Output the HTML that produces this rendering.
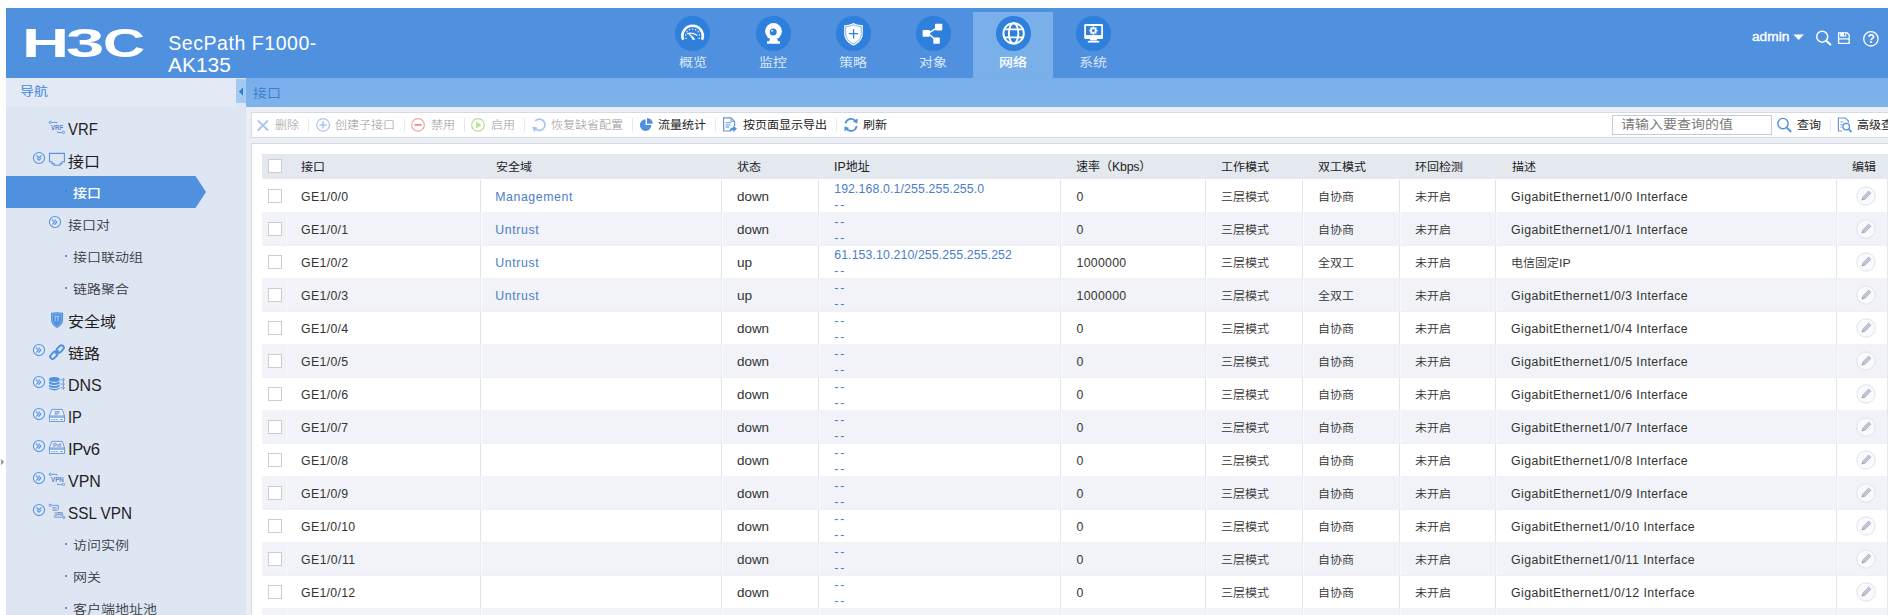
<!DOCTYPE html>
<html lang="zh-CN"><head><meta charset="utf-8"><title>H3C SecPath F1000-AK135</title>
<style>
html,body{margin:0;padding:0;background:#fff;}
body{width:1888px;height:615px;overflow:hidden;position:relative;font-family:"Liberation Sans","Noto Sans CJK SC",sans-serif;font-weight:300;}
.t{position:absolute;white-space:nowrap;}
.r{position:absolute;}
svg{display:block;overflow:visible}
</style></head><body>
<div class="r" style="left:6px;top:8px;width:1882px;height:70px;background:#4f91df;"></div>
<div class="r" style="left:5.5px;top:78px;width:240.5px;height:537px;background:#dfe6f3;"></div>
<div class="r" style="left:246px;top:78px;width:1642px;height:29px;background:linear-gradient(#78aeea,#7eb3eb);"></div>
<div class="r" style="left:246px;top:107px;width:1642px;height:508px;background:#ebeef4;"></div>
<div class="r" style="left:5.5px;top:78px;width:230.5px;height:29px;background:#e4eaf5;"></div>
<div class="r" style="left:236px;top:79px;width:10px;height:24px;background:#a3caf2;"></div>
<svg class="r" style="left:236px;top:79px" width="10" height="24"><path d="M7 8.3 L3 12.5 L7 16.7Z" fill="#2f7bd6"/></svg>
<div class="r" style="left:0;top:22.5px;font-size:40px;line-height:40px;color:#fff;font-weight:bold;height:40px"><span class="t" style="left:21.6px;transform-origin:0 50%;transform:scale(1.63,1.02)">H</span><span class="t" style="left:65.8px;transform-origin:0 50%;transform:scale(1.725,1.02)">3</span><span class="t" style="left:102.5px;transform-origin:0 50%;transform:scale(1.46,1.02)">C</span></div>
<div class="t " style="left:168.3px;top:32.0px;font-size:19.5px;line-height:22px;color:#fff;letter-spacing:0.544px;">SecPath F1000-</div>
<div class="t " style="left:168.3px;top:53.5px;font-size:19.5px;line-height:22px;color:#fff;transform-origin:0 50%;transform:scaleX(1.0724);">AK135</div>
<div class="r" style="left:973px;top:12px;width:80px;height:66px;background:#7ab0ea;"></div>
<div class="r" style="left:675.2px;top:15.899999999999999px;width:34.8px;height:34.8px;border-radius:50%;background:#2f7fdc"></div>
<div class="t" style="left:653px;top:53px;width:80px;text-align:center;font-size:14px;line-height:20px;color:#dbe8f9;font-weight:400;transform:scaleY(0.875)">概览</div>
<div class="r" style="left:756.1px;top:15.899999999999999px;width:34.8px;height:34.8px;border-radius:50%;background:#2f7fdc"></div>
<div class="t" style="left:733px;top:53px;width:80px;text-align:center;font-size:14px;line-height:20px;color:#dbe8f9;font-weight:400;transform:scaleY(0.875)">监控</div>
<div class="r" style="left:836.1px;top:15.899999999999999px;width:34.8px;height:34.8px;border-radius:50%;background:#2f7fdc"></div>
<div class="t" style="left:813px;top:53px;width:80px;text-align:center;font-size:14px;line-height:20px;color:#dbe8f9;font-weight:400;transform:scaleY(0.875)">策略</div>
<div class="r" style="left:916.1px;top:15.899999999999999px;width:34.8px;height:34.8px;border-radius:50%;background:#2f7fdc"></div>
<div class="t" style="left:893px;top:53px;width:80px;text-align:center;font-size:14px;line-height:20px;color:#dbe8f9;font-weight:400;transform:scaleY(0.875)">对象</div>
<div class="r" style="left:996.1px;top:15.899999999999999px;width:34.8px;height:34.8px;border-radius:50%;background:#2f7fdc"></div>
<div class="t" style="left:973px;top:53px;width:80px;text-align:center;font-size:14px;line-height:20px;color:#fff;font-weight:500;transform:scaleY(0.875)">网络</div>
<div class="r" style="left:1076.1px;top:15.899999999999999px;width:34.8px;height:34.8px;border-radius:50%;background:#2f7fdc"></div>
<div class="t" style="left:1053px;top:53px;width:80px;text-align:center;font-size:14px;line-height:20px;color:#dbe8f9;font-weight:400;transform:scaleY(0.875)">系统</div>
<svg class="r" style="left:660px;top:8px" width="460" height="70" viewBox="660 8 460 70"><path d="M683.14 39.72 A10.2 10.2 0 1 1 702.06 39.72" fill="none" stroke="#fff" stroke-width="2.6"/><circle cx="686.12" cy="38.26" r="0.75" fill="#fff"/><circle cx="685.77" cy="34.94" r="0.75" fill="#fff"/><circle cx="687.02" cy="31.84" r="0.75" fill="#fff"/><circle cx="689.58" cy="29.70" r="0.75" fill="#fff"/><circle cx="692.60" cy="29.00" r="0.75" fill="#fff"/><circle cx="695.62" cy="29.70" r="0.75" fill="#fff"/><circle cx="698.18" cy="31.84" r="0.75" fill="#fff"/><circle cx="699.43" cy="34.94" r="0.75" fill="#fff"/><circle cx="699.08" cy="38.26" r="0.75" fill="#fff"/><path d="M687.2 33.6 Q692.5 32.2 697.4 35.4" fill="none" stroke="#fff" stroke-width="1.2"/><path d="M687.4 33.2 Q692.2 34.4 695.2 39.6 L692.8 40 Q691.2 35.8 687.4 33.2Z" fill="#fff"/><ellipse cx="773.5" cy="31.3" rx="8.4" ry="8.3" fill="#fff"/><circle cx="773.2" cy="32" r="3.5" fill="#2f7fdc"/><circle cx="772.3" cy="31" r="1.1" fill="#fff"/><circle cx="772.7" cy="31.4" r="0.5" fill="#2f7fdc"/><path d="M769.9 39 H777.2 L778 41.3 H780 V43.8 H767 V41.3 H769.2Z" fill="#fff"/><path d="M853.5 23 C850.5 24.6 847.2 25.2 844.2 25.2 V34 C844.2 39.6 848.6 43.4 853.5 45.8 C858.4 43.4 862.8 39.6 862.8 34 V25.2 C859.8 25.2 856.5 24.6 853.5 23Z" fill="#fff"/><path d="M853.5 24.8 C850.8 26 848.2 26.5 845.7 26.6 V34 C845.7 38.6 849.4 41.9 853.5 44 C857.6 41.9 861.3 38.6 861.3 34 V26.6 C858.8 26.5 856.2 26 853.5 24.8Z" fill="none" stroke="#2f7fdc" stroke-width="0.6"/><path d="M848.9 33.7 H858.2 M853.6 29.2 V38.5" stroke="#2f7fdc" stroke-width="1.3" fill="none"/><path d="M929 32.8 L936 28.4 M929 34 L935 39.6" stroke="#fff" stroke-width="1.4" fill="none"/><rect x="922.6" y="30" width="7.3" height="6.8" rx="0.8" fill="#fff"/><rect x="935" y="23.7" width="7.3" height="6.9" rx="0.8" fill="#fff"/><rect x="933.3" y="37.5" width="6.5" height="6.2" rx="0.8" fill="#fff"/><g fill="none" stroke="#fff" stroke-width="1.9"><circle cx="1013.6" cy="33.4" r="10.2"/><ellipse cx="1013.6" cy="33.4" rx="4.7" ry="10.2"/><path d="M1004.4 29.4 H1022.8 M1004.4 37.4 H1022.8"/></g><rect x="1084.2" y="24" width="18.8" height="14.9" rx="1.2" fill="#fff"/><rect x="1086" y="26" width="15.2" height="9.1" fill="#2f7fdc"/><g fill="#fff"><rect x="1092.5500000000002" y="26.5" width="1.7" height="8.2" transform="rotate(0 1093.4 30.6)"/><rect x="1092.5500000000002" y="26.5" width="1.7" height="8.2" transform="rotate(45 1093.4 30.6)"/><rect x="1092.5500000000002" y="26.5" width="1.7" height="8.2" transform="rotate(90 1093.4 30.6)"/><rect x="1092.5500000000002" y="26.5" width="1.7" height="8.2" transform="rotate(135 1093.4 30.6)"/><circle cx="1093.4" cy="30.6" r="3"/></g><circle cx="1093.4" cy="30.6" r="1.5" fill="#2f7fdc"/><path d="M1090.4 38.9 H1096.6 L1097.4 40.4 H1089.6Z" fill="#fff"/><rect x="1087.8" y="40.9" width="11.4" height="1.7" fill="#fff"/></svg>
<div class="t " style="left:1751.5px;top:27.700000000000003px;font-size:12.3px;line-height:18px;color:#fff;-webkit-text-stroke:0.35px #fff;transform-origin:0 50%;transform:scaleX(1.1134);">admin</div>
<svg class="r" style="left:1792px;top:34px" width="13" height="8" viewBox="1792 34 13 8"><path d="M1793.3 34.6 H1803.9 L1798.6 40Z" fill="#fff"/></svg>
<svg class="r" style="left:1814px;top:29px" width="18" height="18" viewBox="1814 29 18 18"><circle cx="1822.2" cy="36.7" r="5.5" fill="none" stroke="#fff" stroke-width="1.5"/><path d="M1826.2 40.8 L1830.4 44.6" stroke="#fff" stroke-width="2" stroke-linecap="round"/></svg>
<svg class="r" style="left:1837px;top:31px" width="14" height="14" viewBox="1837 31 14 14"><path d="M1838.6 32.8 H1847 L1849.2 35 V43.4 H1838.6Z" fill="none" stroke="#fff" stroke-width="1.3" stroke-linejoin="round"/><rect x="1840.2" y="32.4" width="6" height="4.2" fill="#fff"/><rect x="1844" y="33" width="1.2" height="2.6" fill="#4f91df"/><path d="M1838.6 38.9 H1849.2" stroke="#fff" stroke-width="1.2"/></svg>
<svg class="r" style="left:1862px;top:30px" width="18" height="18" viewBox="1862 30 18 18"><circle cx="1870.9" cy="38.8" r="7.2" fill="none" stroke="#fff" stroke-width="1.3"/></svg>
<div class="t " style="left:1867.6px;top:31.299999999999997px;font-size:12px;line-height:16px;color:#fff;font-weight:bold">?</div>
<div class="t " style="left:20px;top:81.5px;font-size:14px;line-height:20px;color:#4088de;font-weight:400;transform:scaleY(0.875);">导航</div>
<div class="t " style="left:253px;top:83.8px;font-size:14px;line-height:20px;color:#3e7fd2;font-weight:400;transform:scaleY(0.875);">接口</div>
<div class="t " style="left:68px;top:118.80000000000001px;font-size:16.6px;line-height:22px;color:#1f1f1f;transform-origin:0 50%;transform:scaleX(0.8979);">VRF</div>
<div class="t " style="left:68px;top:151.0px;font-size:16px;line-height:22px;color:#1f1f1f;font-weight:400;transform:scaleY(0.94);">接口</div>
<svg class="r" style="left:6px;top:176px" width="200" height="32"><path d="M0 0 H189.5 L200 16 L189.5 32 H0Z" fill="#4f91df"/></svg>
<div class="r" style="left:65.3px;top:190px;width:2px;height:2px;background:#3b7fd4;"></div>
<div class="t " style="left:73px;top:183.5px;font-size:14px;line-height:20px;color:#fff;font-weight:500;transform:scaleY(0.875);">接口</div>
<div class="t " style="left:68px;top:215.7px;font-size:14px;line-height:20px;color:#343a44;font-weight:350;transform:scaleY(0.875);">接口对</div>
<div class="r" style="left:65.3px;top:255px;width:2px;height:2px;background:#5f8fd0;"></div>
<div class="t " style="left:73px;top:247.7px;font-size:14px;line-height:20px;color:#343a44;font-weight:350;transform:scaleY(0.875);">接口联动组</div>
<div class="r" style="left:65.3px;top:287px;width:2px;height:2px;background:#5f8fd0;"></div>
<div class="t " style="left:73px;top:279.7px;font-size:14px;line-height:20px;color:#343a44;font-weight:350;transform:scaleY(0.875);">链路聚合</div>
<div class="t " style="left:68px;top:311.0px;font-size:16px;line-height:22px;color:#1f1f1f;font-weight:400;transform:scaleY(0.94);">安全域</div>
<div class="t " style="left:68px;top:343.0px;font-size:16px;line-height:22px;color:#1f1f1f;font-weight:400;transform:scaleY(0.94);">链路</div>
<div class="t " style="left:68px;top:374.8px;font-size:16.6px;line-height:22px;color:#1f1f1f;transform-origin:0 50%;transform:scaleX(0.9644);">DNS</div>
<div class="t " style="left:68px;top:406.8px;font-size:16.6px;line-height:22px;color:#1f1f1f;transform-origin:0 50%;transform:scaleX(0.8861);">IP</div>
<div class="t " style="left:68px;top:438.8px;font-size:16.6px;line-height:22px;color:#1f1f1f;letter-spacing:-0.406px;">IPv6</div>
<div class="t " style="left:68px;top:470.8px;font-size:16.6px;line-height:22px;color:#1f1f1f;transform-origin:0 50%;transform:scaleX(0.9612);">VPN</div>
<div class="t " style="left:68px;top:502.79999999999995px;font-size:16.6px;line-height:22px;color:#1f1f1f;transform-origin:0 50%;transform:scaleX(0.9211);">SSL VPN</div>
<div class="r" style="left:65.3px;top:543px;width:2px;height:2px;background:#5f8fd0;"></div>
<div class="t " style="left:73px;top:535.7px;font-size:14px;line-height:20px;color:#343a44;font-weight:350;transform:scaleY(0.875);">访问实例</div>
<div class="r" style="left:65.3px;top:575px;width:2px;height:2px;background:#5f8fd0;"></div>
<div class="t " style="left:73px;top:567.7px;font-size:14px;line-height:20px;color:#343a44;font-weight:350;transform:scaleY(0.875);">网关</div>
<div class="r" style="left:65.3px;top:607px;width:2px;height:2px;background:#5f8fd0;"></div>
<div class="t " style="left:73px;top:599.7px;font-size:14px;line-height:20px;color:#343a44;font-weight:350;transform:scaleY(0.875);">客户端地址池</div>
<svg class="r" style="left:0;top:0" width="246" height="615" viewBox="0 0 246 615"><g fill="none" stroke="#5a94de" stroke-width="0.9"><circle cx="50.2" cy="122.4" r="1.15"/><path d="M51.4 122.4 H57 V123.5"/><path d="M57.4 131.4 V132.5 H62.1"/><circle cx="63.4" cy="132.4" r="1.2"/></g><text x="51" y="130.2" font-size="7.8" font-family="Liberation Sans,sans-serif" font-weight="bold" fill="#5f86c2" textLength="12.3" lengthAdjust="spacingAndGlyphs">VRF</text><rect x="52.3" y="128.5" width="1.5" height="1.6" fill="#5a94de"/><g fill="none" stroke="#5a94de" stroke-width="1.05"><circle cx="39" cy="158" r="5.6"/><path d="M36.4 155.5 L39 157.7 L41.6 155.5 M36.9 158.2 L39 160.3 L41.1 158.2"/></g><path d="M49.5 153.4 H64.4 V161.8 H62 V163.6 H60 V165.3 H54 V163.6 H52 V161.8 H49.5Z" fill="none" stroke="#5a94de" stroke-width="1.1"/><g fill="none" stroke="#5a94de" stroke-width="1.05"><circle cx="55" cy="222" r="5.6"/><path d="M52.3 219.6 L54.6 222.2 L52.3 224.7 M54.6 219.6 L56.9 222.2 L54.6 224.7"/></g><path d="M51 312.8 Q57 311.6 63.1 312.8 V320 Q63.1 324.6 57 327.9 Q51 324.6 51 320Z" fill="#4f91df"/><path d="M52.4 314 Q57 313.2 61.7 314 V320 Q61.7 323.6 57 326.3 Q52.4 323.6 52.4 320Z" fill="none" stroke="#8db8ec" stroke-width="0.7"/><path d="M54.4 316.3 H59.8 M58 316.3 V321.5 M55.2 316.3 V321.5" stroke="#a9c9f0" stroke-width="1" fill="none"/><g fill="none" stroke="#5a94de" stroke-width="1.05"><circle cx="39" cy="350" r="5.6"/><path d="M36.3 347.6 L38.6 350.2 L36.3 352.7 M38.6 347.6 L40.9 350.2 L38.6 352.7"/></g><g fill="none" stroke="#4f91df" stroke-width="1.9"><rect x="56.1" y="346.5" width="8.2" height="4.8" rx="2.4" transform="rotate(-45 60.2 348.9)"/><rect x="49.7" y="352.9" width="8.2" height="4.8" rx="2.4" transform="rotate(-45 53.8 355.3)"/><path d="M55.3 353.8 L58.7 350.4" stroke-width="1.7"/></g><g fill="none" stroke="#5a94de" stroke-width="1.05"><circle cx="39" cy="382" r="5.6"/><path d="M36.3 379.6 L38.6 382.2 L36.3 384.7 M38.6 379.6 L40.9 382.2 L38.6 384.7"/></g><g fill="#4f91df"><ellipse cx="54.3" cy="379.4" rx="5.3" ry="2.3"/><path d="M49 381.2 Q54.3 384.6 59.6 381.2 V383.4 Q54.3 386.8 49 383.4Z"/><path d="M49 384.4 Q54.3 387.8 59.6 384.4 V386.4 Q54.3 389.8 49 386.4Z"/><path d="M49 387.4 Q54.3 390.8 59.6 387.4 V388.4 Q54.3 392.4 49 388.4Z"/></g><g fill="#86a9dc"><rect x="60.6" y="379" width="1.8" height="1.6"/><rect x="60.6" y="383.3" width="1.8" height="1.6"/><rect x="60.6" y="387.1" width="1.8" height="1.6"/></g><path d="M63.4 378 V389.8 M63.4 379.8 H64.9 M63.4 384.1 H64.9 M63.4 387.9 H64.9" stroke="#5a94de" stroke-width="0.9" fill="none"/><g fill="none" stroke="#5a94de" stroke-width="1.05"><circle cx="39" cy="414" r="5.6"/><path d="M36.3 411.6 L38.6 414.2 L36.3 416.7 M38.6 411.6 L40.9 414.2 L38.6 416.7"/></g><path d="M51.8 409.4 H62.2 L64.6 416.2 H49.3Z" fill="#eaf0fa" stroke="#5a94de" stroke-width="0.9"/><rect x="49.4" y="416.2" width="15.1" height="5.2" fill="#f2f6fc" stroke="#5a94de" stroke-width="0.9"/><rect x="49.8" y="416.4" width="14.3" height="1.6" fill="#8db8ec"/><path d="M51.2 419.6 H58.6" stroke="#5d7fb0" stroke-width="0.9" stroke-dasharray="0.9 0.6"/><rect x="60.6" y="419.1" width="1.9" height="1" fill="#5d7fb0"/><text x="57" y="414.6" text-anchor="middle" font-size="4.6" font-family="Liberation Sans,sans-serif" font-weight="bold" fill="#6a8fc4" textLength="5" lengthAdjust="spacingAndGlyphs">IP</text><g fill="none" stroke="#5a94de" stroke-width="1.05"><circle cx="39" cy="446" r="5.6"/><path d="M36.3 443.6 L38.6 446.2 L36.3 448.7 M38.6 443.6 L40.9 446.2 L38.6 448.7"/></g><path d="M51.8 441.4 H62.2 L64.6 448.2 H49.3Z" fill="#eaf0fa" stroke="#5a94de" stroke-width="0.9"/><rect x="49.4" y="448.2" width="15.1" height="5.2" fill="#f2f6fc" stroke="#5a94de" stroke-width="0.9"/><rect x="49.8" y="448.4" width="14.3" height="1.6" fill="#8db8ec"/><path d="M51.2 451.6 H58.6" stroke="#5d7fb0" stroke-width="0.9" stroke-dasharray="0.9 0.6"/><rect x="60.6" y="451.1" width="1.9" height="1" fill="#5d7fb0"/><text x="57" y="446.6" text-anchor="middle" font-size="4.6" font-family="Liberation Sans,sans-serif" font-weight="bold" fill="#6a8fc4" textLength="8.4" lengthAdjust="spacingAndGlyphs">IPv6</text><g fill="none" stroke="#5a94de" stroke-width="1.05"><circle cx="39" cy="478" r="5.6"/><path d="M36.3 475.6 L38.6 478.2 L36.3 480.7 M38.6 475.6 L40.9 478.2 L38.6 480.7"/></g><g fill="none" stroke="#5a94de" stroke-width="0.9"><circle cx="50.2" cy="474.4" r="1.15"/><path d="M51.4 474.4 H57 V475.5"/><path d="M57.4 483.4 V484.5 H62.1"/><circle cx="63.4" cy="484.4" r="1.2"/></g><text x="51" y="482.2" font-size="7.8" font-family="Liberation Sans,sans-serif" font-weight="bold" fill="#5f86c2" textLength="12.8" lengthAdjust="spacingAndGlyphs">VPN</text><g fill="none" stroke="#5a94de" stroke-width="1.05"><circle cx="39" cy="510" r="5.6"/><path d="M36.4 507.5 L39 509.7 L41.6 507.5 M36.9 510.2 L39 512.3 L41.1 510.2"/></g><g fill="none" stroke="#5a94de" stroke-width="0.9"><circle cx="50.2" cy="505.3" r="1.15"/><path d="M51.4 505.3 H58.3 V509.5"/><path d="M54.3 515.3 V517.2 H62.6"/><circle cx="63.8" cy="517.4" r="1.1"/></g><text x="52.2" y="510.7" font-size="5.2" font-family="Liberation Sans,sans-serif" font-weight="bold" fill="#5f86c2" textLength="5.4" lengthAdjust="spacingAndGlyphs">SSL</text><text x="54.5" y="515.6" font-size="5.2" font-family="Liberation Sans,sans-serif" font-weight="bold" fill="#5f86c2" textLength="8.6" lengthAdjust="spacingAndGlyphs">VPN</text></svg>
<svg class="r" style="left:1px;top:456px" width="5" height="10"><path d="M0 2.8 L3.2 6 L0 9.2Z" fill="#999"/></svg>
<div class="r" style="left:251px;top:112px;width:1645px;height:26px;background:#fff;border:1px solid #d5dae4;box-sizing:border-box"></div>
<div class="t " style="left:275px;top:116.3px;font-size:12px;line-height:18px;color:#999;transform:scaleY(0.96);">删除</div>
<div class="r" style="left:308px;top:118px;width:1px;height:14px;background:#e6e9ef;"></div>
<div class="t " style="left:335px;top:116.3px;font-size:12px;line-height:18px;color:#999;transform:scaleY(0.96);">创建子接口</div>
<div class="r" style="left:404px;top:118px;width:1px;height:14px;background:#e6e9ef;"></div>
<div class="t " style="left:431px;top:116.3px;font-size:12px;line-height:18px;color:#999;transform:scaleY(0.96);">禁用</div>
<div class="r" style="left:464px;top:118px;width:1px;height:14px;background:#e6e9ef;"></div>
<div class="t " style="left:491px;top:116.3px;font-size:12px;line-height:18px;color:#999;transform:scaleY(0.96);">启用</div>
<div class="r" style="left:524px;top:118px;width:1px;height:14px;background:#e6e9ef;"></div>
<div class="t " style="left:551px;top:116.3px;font-size:12px;line-height:18px;color:#999;transform:scaleY(0.96);">恢复缺省配置</div>
<div class="r" style="left:632px;top:118px;width:1px;height:14px;background:#e6e9ef;"></div>
<div class="t " style="left:658px;top:116.3px;font-size:12px;line-height:18px;color:#222;font-weight:400;transform:scaleY(0.96);">流量统计</div>
<div class="r" style="left:715px;top:118px;width:1px;height:14px;background:#e6e9ef;"></div>
<div class="t " style="left:743px;top:116.3px;font-size:12px;line-height:18px;color:#222;font-weight:400;transform:scaleY(0.96);">按页面显示导出</div>
<div class="r" style="left:836px;top:118px;width:1px;height:14px;background:#e6e9ef;"></div>
<div class="t " style="left:863px;top:116.3px;font-size:12px;line-height:18px;color:#222;font-weight:400;transform:scaleY(0.96);">刷新</div>
<div class="r" style="left:1612px;top:115px;width:160px;height:20px;background:#fff;border:1px solid #c5cbd6;box-sizing:border-box"></div>
<div class="t " style="left:1621px;top:116.3px;font-size:14px;line-height:18px;color:#7a7a7a;font-weight:400;transform:scaleY(0.875);">请输入要查询的值</div>
<div class="t " style="left:1797px;top:116.3px;font-size:12px;line-height:18px;color:#222;font-weight:400;transform:scaleY(0.96);">查询</div>
<div class="r" style="left:1830px;top:118px;width:1px;height:14px;background:#e6e9ef;"></div>
<div class="t " style="left:1857px;top:116.3px;font-size:12px;line-height:18px;color:#222;font-weight:400;transform:scaleY(0.96);">高级查询</div>
<svg class="r" style="left:0;top:0" width="1888" height="140" viewBox="0 0 1888 140"><path d="M257.8 120.3 L268 130.5 M268 120.3 L257.8 130.5" stroke="#a8c6ee" stroke-width="1.9" fill="none"/><circle cx="323.1" cy="124.9" r="6.3" fill="none" stroke="#a8c6ee" stroke-width="1.2"/><path d="M319.4 124.9 H326.8 M323.1 121.2 V128.6" stroke="#a8c6ee" stroke-width="1.5"/><circle cx="418" cy="124.9" r="6.3" fill="none" stroke="#f3a3a3" stroke-width="1.2"/><path d="M414.4 124.9 H421.6" stroke="#f08c8c" stroke-width="1.8"/><circle cx="478" cy="124.9" r="6.3" fill="none" stroke="#b9dd92" stroke-width="1.2"/><path d="M476.2 121.6 L481.4 124.9 L476.2 128.2Z" fill="#b9dd92"/><path d="M535.2 128.6 A5.6 5.6 0 1 0 534.2 122.4" fill="none" stroke="#a8c6ee" stroke-width="1.7" transform="rotate(18 539.4 124.9)"/><path d="M532.2 127 L537.6 127.6 L534.2 132.2Z" fill="#a8c6ee"/><path d="M645.6 119.3 A5.8 5.8 0 1 0 651.4 125.1 H645.6Z" fill="#4f91df"/><path d="M647 117.9 A5.8 5.8 0 0 1 652.8 123.7 H647Z" fill="#4f91df"/><path d="M730.4 131 H723.6 V117.8 H731 L734.6 121.4 V126" fill="none" stroke="#6f93cc" stroke-width="1.2"/><path d="M731 117.8 V121.4 H734.6" fill="none" stroke="#6f93cc" stroke-width="0.9"/><path d="M725.6 122.6 H731.4 M725.6 124.8 H730.6 M725.6 127 H729.2" stroke="#7fb0ee" stroke-width="1.3"/><path d="M729.6 131.8 Q729.8 127.6 733.2 127.6 V125.6 L737 128.8 L733.2 132 V130.2 Q731 130 729.6 131.8Z" fill="#4f91df"/><g fill="none" stroke="#4f91df" stroke-width="1.8"><path d="M845.6 123.2 A5.7 5.7 0 0 1 855.6 121"/><path d="M856.6 126.2 A5.7 5.7 0 0 1 846.4 128.6"/></g><path d="M857.6 118.4 L857.4 123.4 L852.8 121.6Z" fill="#4f91df"/><path d="M844.4 131.2 L844.6 126.2 L849.2 128Z" fill="#4f91df"/><circle cx="1783" cy="123.6" r="5.2" fill="none" stroke="#4f91df" stroke-width="1.4"/><path d="M1786.8 127.6 L1791.2 132" stroke="#4f91df" stroke-width="1.8"/><path d="M1842 131 H1838.4 V118 H1845.4 L1848.4 121 V122.6" fill="none" stroke="#6f93cc" stroke-width="1.2"/><path d="M1840.4 122 H1843.4 M1840.4 124.6 H1842.4 M1840.4 127.2 H1841.8" stroke="#7fb0ee" stroke-width="1.2"/><circle cx="1846.2" cy="126.6" r="3.3" fill="none" stroke="#4f91df" stroke-width="1.3"/><path d="M1848.6 129.2 L1851.6 132.2" stroke="#4f91df" stroke-width="1.7"/></svg>
<div class="r" style="left:251px;top:143px;width:1645px;height:480px;background:#fff;border:1px solid #d5dae4;box-sizing:border-box"></div>
<div class="r" style="left:262px;top:154px;width:1626px;height:25px;background:#e4e8ef;"></div>
<div class="r" style="left:268px;top:159px;width:14px;height:14px;background:#fff;border:1px solid #cbcdd2;box-sizing:border-box"></div>
<div class="t " style="left:301px;top:157.5px;font-size:12px;line-height:18px;color:#222;font-weight:400;transform:scaleY(0.96);">接口</div>
<div class="t " style="left:496px;top:157.5px;font-size:12px;line-height:18px;color:#222;font-weight:400;transform:scaleY(0.96);">安全域</div>
<div class="t " style="left:737px;top:157.5px;font-size:12px;line-height:18px;color:#222;font-weight:400;transform:scaleY(0.96);">状态</div>
<div class="t" style="left:834px;top:157.5px;font-size:12px;line-height:18px;color:#222;font-weight:400"><span style="font-size:12.3px">IP</span>地址</div>
<div class="t" style="left:1076px;top:157.5px;font-size:12px;line-height:18px;color:#222;font-weight:400">速率（<span style="font-size:12.3px;letter-spacing:-0.2px">Kbps</span>）</div>
<div class="t " style="left:1221px;top:157.5px;font-size:12px;line-height:18px;color:#222;font-weight:400;transform:scaleY(0.96);">工作模式</div>
<div class="t " style="left:1318px;top:157.5px;font-size:12px;line-height:18px;color:#222;font-weight:400;transform:scaleY(0.96);">双工模式</div>
<div class="t " style="left:1415px;top:157.5px;font-size:12px;line-height:18px;color:#222;font-weight:400;transform:scaleY(0.96);">环回检测</div>
<div class="t " style="left:1512px;top:157.5px;font-size:12px;line-height:18px;color:#222;font-weight:400;transform:scaleY(0.96);">描述</div>
<div class="t " style="left:1852px;top:157.5px;font-size:12px;line-height:18px;color:#222;font-weight:400;transform:scaleY(0.96);">编辑</div>
<div class="r" style="left:480px;top:180px;width:1px;height:32px;background:#e1e3e9;"></div>
<div class="r" style="left:721px;top:180px;width:1px;height:32px;background:#e1e3e9;"></div>
<div class="r" style="left:818px;top:180px;width:1px;height:32px;background:#e1e3e9;"></div>
<div class="r" style="left:1060px;top:180px;width:1px;height:32px;background:#e1e3e9;"></div>
<div class="r" style="left:1205px;top:180px;width:1px;height:32px;background:#e1e3e9;"></div>
<div class="r" style="left:1302px;top:180px;width:1px;height:32px;background:#e1e3e9;"></div>
<div class="r" style="left:1399px;top:180px;width:1px;height:32px;background:#e1e3e9;"></div>
<div class="r" style="left:1495px;top:180px;width:1px;height:32px;background:#e1e3e9;"></div>
<div class="r" style="left:1836px;top:180px;width:1px;height:32px;background:#e1e3e9;"></div>
<div class="r" style="left:268px;top:189px;width:14px;height:14px;background:#fff;border:1px solid #cbcdd2;box-sizing:border-box"></div>
<div class="t " style="left:301px;top:187.5px;font-size:12.3px;line-height:18px;color:#333;letter-spacing:0.346px;">GE1/0/0</div>
<div class="t " style="left:495.2px;top:187.5px;font-size:12.3px;line-height:18px;color:#4a7ec9;letter-spacing:0.602px;">Management</div>
<div class="t " style="left:737px;top:187.5px;font-size:12.3px;line-height:18px;color:#333;transform-origin:0 50%;transform:scaleX(1.0916);">down</div>
<div class="t " style="left:834.2px;top:180.9px;font-size:12.3px;line-height:16px;color:#4a7ec9;letter-spacing:0.124px;">192.168.0.1/255.255.255.0</div>
<div class="t " style="left:834.2px;top:196.9px;font-size:12.3px;line-height:16px;color:#4a7ec9;letter-spacing:1.997px;">--</div>
<div class="t " style="left:1076.5px;top:187.5px;font-size:12.3px;line-height:18px;color:#333;">0</div>
<div class="t " style="left:1221px;top:187.5px;font-size:12px;line-height:18px;color:#333;font-weight:350;transform:scaleY(0.96);">三层模式</div>
<div class="t " style="left:1318px;top:187.5px;font-size:12px;line-height:18px;color:#333;font-weight:350;transform:scaleY(0.96);">自协商</div>
<div class="t " style="left:1415px;top:187.5px;font-size:12px;line-height:18px;color:#333;font-weight:350;transform:scaleY(0.96);">未开启</div>
<div class="t " style="left:1511.1px;top:187.5px;font-size:12.3px;line-height:18px;color:#333;letter-spacing:0.428px;">GigabitEthernet1/0/0 Interface</div>
<svg class="r" style="left:1856.4px;top:185.5px" width="20" height="20" viewBox="-10 -10 20 20"><circle cx="0" cy="0" r="9.2" fill="#fafafd" stroke="#e0e3ec" stroke-width="1"/><g transform="rotate(-45) scale(0.9)"><path d="M-6.8 0 L-3.6 -2.1 H6.4 V2.1 H-3.6Z" fill="#b4b8cf"/><path d="M-3 -0.7 H6.4 M-3 0.7 H6.4" stroke="#dcdeea" stroke-width="0.6"/><path d="M-6.8 0 L-5 -1.2 V1.2Z" fill="#8d91ad"/></g></svg>
<div class="r" style="left:262px;top:212px;width:1626px;height:34px;background:#f1f3f8;border-bottom:1px solid #eef0f5;box-sizing:border-box"></div>
<div class="r" style="left:285px;top:213px;width:1px;height:32px;background:#eceef4;"></div>
<div class="r" style="left:286px;top:213px;width:1px;height:32px;background:#fafbfd;"></div>
<div class="r" style="left:480px;top:213px;width:1px;height:32px;background:#e9ecf2;"></div>
<div class="r" style="left:481px;top:213px;width:1px;height:32px;background:#f9fafd;"></div>
<div class="r" style="left:721px;top:213px;width:1px;height:32px;background:#e9ecf2;"></div>
<div class="r" style="left:722px;top:213px;width:1px;height:32px;background:#f9fafd;"></div>
<div class="r" style="left:818px;top:213px;width:1px;height:32px;background:#e9ecf2;"></div>
<div class="r" style="left:819px;top:213px;width:1px;height:32px;background:#f9fafd;"></div>
<div class="r" style="left:1060px;top:213px;width:1px;height:32px;background:#e9ecf2;"></div>
<div class="r" style="left:1061px;top:213px;width:1px;height:32px;background:#f9fafd;"></div>
<div class="r" style="left:1205px;top:213px;width:1px;height:32px;background:#e9ecf2;"></div>
<div class="r" style="left:1206px;top:213px;width:1px;height:32px;background:#f9fafd;"></div>
<div class="r" style="left:1302px;top:213px;width:1px;height:32px;background:#e9ecf2;"></div>
<div class="r" style="left:1303px;top:213px;width:1px;height:32px;background:#f9fafd;"></div>
<div class="r" style="left:1399px;top:213px;width:1px;height:32px;background:#e9ecf2;"></div>
<div class="r" style="left:1400px;top:213px;width:1px;height:32px;background:#f9fafd;"></div>
<div class="r" style="left:1495px;top:213px;width:1px;height:32px;background:#e9ecf2;"></div>
<div class="r" style="left:1496px;top:213px;width:1px;height:32px;background:#f9fafd;"></div>
<div class="r" style="left:1836px;top:213px;width:1px;height:32px;background:#e9ecf2;"></div>
<div class="r" style="left:1837px;top:213px;width:1px;height:32px;background:#f9fafd;"></div>
<div class="r" style="left:268px;top:222px;width:14px;height:14px;background:#fff;border:1px solid #cbcdd2;box-sizing:border-box"></div>
<div class="t " style="left:301px;top:220.5px;font-size:12.3px;line-height:18px;color:#333;letter-spacing:0.346px;">GE1/0/1</div>
<div class="t " style="left:495.2px;top:220.5px;font-size:12.3px;line-height:18px;color:#4a7ec9;letter-spacing:0.627px;">Untrust</div>
<div class="t " style="left:737px;top:220.5px;font-size:12.3px;line-height:18px;color:#333;transform-origin:0 50%;transform:scaleX(1.0916);">down</div>
<div class="t " style="left:834.2px;top:213.9px;font-size:12.3px;line-height:16px;color:#4a7ec9;letter-spacing:1.997px;">--</div>
<div class="t " style="left:834.2px;top:229.9px;font-size:12.3px;line-height:16px;color:#4a7ec9;letter-spacing:1.997px;">--</div>
<div class="t " style="left:1076.5px;top:220.5px;font-size:12.3px;line-height:18px;color:#333;">0</div>
<div class="t " style="left:1221px;top:220.5px;font-size:12px;line-height:18px;color:#333;font-weight:350;transform:scaleY(0.96);">三层模式</div>
<div class="t " style="left:1318px;top:220.5px;font-size:12px;line-height:18px;color:#333;font-weight:350;transform:scaleY(0.96);">自协商</div>
<div class="t " style="left:1415px;top:220.5px;font-size:12px;line-height:18px;color:#333;font-weight:350;transform:scaleY(0.96);">未开启</div>
<div class="t " style="left:1511.1px;top:220.5px;font-size:12.3px;line-height:18px;color:#333;letter-spacing:0.428px;">GigabitEthernet1/0/1 Interface</div>
<svg class="r" style="left:1856.4px;top:218.5px" width="20" height="20" viewBox="-10 -10 20 20"><circle cx="0" cy="0" r="9.2" fill="#fafafd" stroke="#e0e3ec" stroke-width="1"/><g transform="rotate(-45) scale(0.9)"><path d="M-6.8 0 L-3.6 -2.1 H6.4 V2.1 H-3.6Z" fill="#b4b8cf"/><path d="M-3 -0.7 H6.4 M-3 0.7 H6.4" stroke="#dcdeea" stroke-width="0.6"/><path d="M-6.8 0 L-5 -1.2 V1.2Z" fill="#8d91ad"/></g></svg>
<div class="r" style="left:480px;top:246px;width:1px;height:32px;background:#e1e3e9;"></div>
<div class="r" style="left:721px;top:246px;width:1px;height:32px;background:#e1e3e9;"></div>
<div class="r" style="left:818px;top:246px;width:1px;height:32px;background:#e1e3e9;"></div>
<div class="r" style="left:1060px;top:246px;width:1px;height:32px;background:#e1e3e9;"></div>
<div class="r" style="left:1205px;top:246px;width:1px;height:32px;background:#e1e3e9;"></div>
<div class="r" style="left:1302px;top:246px;width:1px;height:32px;background:#e1e3e9;"></div>
<div class="r" style="left:1399px;top:246px;width:1px;height:32px;background:#e1e3e9;"></div>
<div class="r" style="left:1495px;top:246px;width:1px;height:32px;background:#e1e3e9;"></div>
<div class="r" style="left:1836px;top:246px;width:1px;height:32px;background:#e1e3e9;"></div>
<div class="r" style="left:268px;top:255px;width:14px;height:14px;background:#fff;border:1px solid #cbcdd2;box-sizing:border-box"></div>
<div class="t " style="left:301px;top:253.5px;font-size:12.3px;line-height:18px;color:#333;letter-spacing:0.346px;">GE1/0/2</div>
<div class="t " style="left:495.2px;top:253.5px;font-size:12.3px;line-height:18px;color:#4a7ec9;letter-spacing:0.627px;">Untrust</div>
<div class="t " style="left:737px;top:253.5px;font-size:12.3px;line-height:18px;color:#333;transform-origin:0 50%;transform:scaleX(1.1105);">up</div>
<div class="t " style="left:834.2px;top:246.9px;font-size:12.3px;line-height:16px;color:#4a7ec9;letter-spacing:0.119px;">61.153.10.210/255.255.255.252</div>
<div class="t " style="left:834.2px;top:262.9px;font-size:12.3px;line-height:16px;color:#4a7ec9;letter-spacing:1.997px;">--</div>
<div class="t " style="left:1076.5px;top:253.5px;font-size:12.3px;line-height:18px;color:#333;letter-spacing:0.288px;">1000000</div>
<div class="t " style="left:1221px;top:253.5px;font-size:12px;line-height:18px;color:#333;font-weight:350;transform:scaleY(0.96);">三层模式</div>
<div class="t " style="left:1318px;top:253.5px;font-size:12px;line-height:18px;color:#333;font-weight:350;transform:scaleY(0.96);">全双工</div>
<div class="t " style="left:1415px;top:253.5px;font-size:12px;line-height:18px;color:#333;font-weight:350;transform:scaleY(0.96);">未开启</div>
<div class="t" style="left:1511px;top:253.5px;font-size:12px;line-height:18px;color:#333;font-weight:350;transform:scaleY(0.96)">电信固定<span style="font-size:12.3px">IP</span></div>
<svg class="r" style="left:1856.4px;top:251.5px" width="20" height="20" viewBox="-10 -10 20 20"><circle cx="0" cy="0" r="9.2" fill="#fafafd" stroke="#e0e3ec" stroke-width="1"/><g transform="rotate(-45) scale(0.9)"><path d="M-6.8 0 L-3.6 -2.1 H6.4 V2.1 H-3.6Z" fill="#b4b8cf"/><path d="M-3 -0.7 H6.4 M-3 0.7 H6.4" stroke="#dcdeea" stroke-width="0.6"/><path d="M-6.8 0 L-5 -1.2 V1.2Z" fill="#8d91ad"/></g></svg>
<div class="r" style="left:262px;top:278px;width:1626px;height:34px;background:#f1f3f8;border-bottom:1px solid #eef0f5;box-sizing:border-box"></div>
<div class="r" style="left:285px;top:279px;width:1px;height:32px;background:#eceef4;"></div>
<div class="r" style="left:286px;top:279px;width:1px;height:32px;background:#fafbfd;"></div>
<div class="r" style="left:480px;top:279px;width:1px;height:32px;background:#e9ecf2;"></div>
<div class="r" style="left:481px;top:279px;width:1px;height:32px;background:#f9fafd;"></div>
<div class="r" style="left:721px;top:279px;width:1px;height:32px;background:#e9ecf2;"></div>
<div class="r" style="left:722px;top:279px;width:1px;height:32px;background:#f9fafd;"></div>
<div class="r" style="left:818px;top:279px;width:1px;height:32px;background:#e9ecf2;"></div>
<div class="r" style="left:819px;top:279px;width:1px;height:32px;background:#f9fafd;"></div>
<div class="r" style="left:1060px;top:279px;width:1px;height:32px;background:#e9ecf2;"></div>
<div class="r" style="left:1061px;top:279px;width:1px;height:32px;background:#f9fafd;"></div>
<div class="r" style="left:1205px;top:279px;width:1px;height:32px;background:#e9ecf2;"></div>
<div class="r" style="left:1206px;top:279px;width:1px;height:32px;background:#f9fafd;"></div>
<div class="r" style="left:1302px;top:279px;width:1px;height:32px;background:#e9ecf2;"></div>
<div class="r" style="left:1303px;top:279px;width:1px;height:32px;background:#f9fafd;"></div>
<div class="r" style="left:1399px;top:279px;width:1px;height:32px;background:#e9ecf2;"></div>
<div class="r" style="left:1400px;top:279px;width:1px;height:32px;background:#f9fafd;"></div>
<div class="r" style="left:1495px;top:279px;width:1px;height:32px;background:#e9ecf2;"></div>
<div class="r" style="left:1496px;top:279px;width:1px;height:32px;background:#f9fafd;"></div>
<div class="r" style="left:1836px;top:279px;width:1px;height:32px;background:#e9ecf2;"></div>
<div class="r" style="left:1837px;top:279px;width:1px;height:32px;background:#f9fafd;"></div>
<div class="r" style="left:268px;top:288px;width:14px;height:14px;background:#fff;border:1px solid #cbcdd2;box-sizing:border-box"></div>
<div class="t " style="left:301px;top:286.5px;font-size:12.3px;line-height:18px;color:#333;letter-spacing:0.346px;">GE1/0/3</div>
<div class="t " style="left:495.2px;top:286.5px;font-size:12.3px;line-height:18px;color:#4a7ec9;letter-spacing:0.627px;">Untrust</div>
<div class="t " style="left:737px;top:286.5px;font-size:12.3px;line-height:18px;color:#333;transform-origin:0 50%;transform:scaleX(1.1105);">up</div>
<div class="t " style="left:834.2px;top:279.9px;font-size:12.3px;line-height:16px;color:#4a7ec9;letter-spacing:1.997px;">--</div>
<div class="t " style="left:834.2px;top:295.9px;font-size:12.3px;line-height:16px;color:#4a7ec9;letter-spacing:1.997px;">--</div>
<div class="t " style="left:1076.5px;top:286.5px;font-size:12.3px;line-height:18px;color:#333;letter-spacing:0.288px;">1000000</div>
<div class="t " style="left:1221px;top:286.5px;font-size:12px;line-height:18px;color:#333;font-weight:350;transform:scaleY(0.96);">三层模式</div>
<div class="t " style="left:1318px;top:286.5px;font-size:12px;line-height:18px;color:#333;font-weight:350;transform:scaleY(0.96);">全双工</div>
<div class="t " style="left:1415px;top:286.5px;font-size:12px;line-height:18px;color:#333;font-weight:350;transform:scaleY(0.96);">未开启</div>
<div class="t " style="left:1511.1px;top:286.5px;font-size:12.3px;line-height:18px;color:#333;letter-spacing:0.428px;">GigabitEthernet1/0/3 Interface</div>
<svg class="r" style="left:1856.4px;top:284.5px" width="20" height="20" viewBox="-10 -10 20 20"><circle cx="0" cy="0" r="9.2" fill="#fafafd" stroke="#e0e3ec" stroke-width="1"/><g transform="rotate(-45) scale(0.9)"><path d="M-6.8 0 L-3.6 -2.1 H6.4 V2.1 H-3.6Z" fill="#b4b8cf"/><path d="M-3 -0.7 H6.4 M-3 0.7 H6.4" stroke="#dcdeea" stroke-width="0.6"/><path d="M-6.8 0 L-5 -1.2 V1.2Z" fill="#8d91ad"/></g></svg>
<div class="r" style="left:480px;top:312px;width:1px;height:32px;background:#e1e3e9;"></div>
<div class="r" style="left:721px;top:312px;width:1px;height:32px;background:#e1e3e9;"></div>
<div class="r" style="left:818px;top:312px;width:1px;height:32px;background:#e1e3e9;"></div>
<div class="r" style="left:1060px;top:312px;width:1px;height:32px;background:#e1e3e9;"></div>
<div class="r" style="left:1205px;top:312px;width:1px;height:32px;background:#e1e3e9;"></div>
<div class="r" style="left:1302px;top:312px;width:1px;height:32px;background:#e1e3e9;"></div>
<div class="r" style="left:1399px;top:312px;width:1px;height:32px;background:#e1e3e9;"></div>
<div class="r" style="left:1495px;top:312px;width:1px;height:32px;background:#e1e3e9;"></div>
<div class="r" style="left:1836px;top:312px;width:1px;height:32px;background:#e1e3e9;"></div>
<div class="r" style="left:268px;top:321px;width:14px;height:14px;background:#fff;border:1px solid #cbcdd2;box-sizing:border-box"></div>
<div class="t " style="left:301px;top:319.5px;font-size:12.3px;line-height:18px;color:#333;letter-spacing:0.346px;">GE1/0/4</div>
<div class="t " style="left:737px;top:319.5px;font-size:12.3px;line-height:18px;color:#333;transform-origin:0 50%;transform:scaleX(1.0916);">down</div>
<div class="t " style="left:834.2px;top:312.9px;font-size:12.3px;line-height:16px;color:#4a7ec9;letter-spacing:1.997px;">--</div>
<div class="t " style="left:834.2px;top:328.9px;font-size:12.3px;line-height:16px;color:#4a7ec9;letter-spacing:1.997px;">--</div>
<div class="t " style="left:1076.5px;top:319.5px;font-size:12.3px;line-height:18px;color:#333;">0</div>
<div class="t " style="left:1221px;top:319.5px;font-size:12px;line-height:18px;color:#333;font-weight:350;transform:scaleY(0.96);">三层模式</div>
<div class="t " style="left:1318px;top:319.5px;font-size:12px;line-height:18px;color:#333;font-weight:350;transform:scaleY(0.96);">自协商</div>
<div class="t " style="left:1415px;top:319.5px;font-size:12px;line-height:18px;color:#333;font-weight:350;transform:scaleY(0.96);">未开启</div>
<div class="t " style="left:1511.1px;top:319.5px;font-size:12.3px;line-height:18px;color:#333;letter-spacing:0.428px;">GigabitEthernet1/0/4 Interface</div>
<svg class="r" style="left:1856.4px;top:317.5px" width="20" height="20" viewBox="-10 -10 20 20"><circle cx="0" cy="0" r="9.2" fill="#fafafd" stroke="#e0e3ec" stroke-width="1"/><g transform="rotate(-45) scale(0.9)"><path d="M-6.8 0 L-3.6 -2.1 H6.4 V2.1 H-3.6Z" fill="#b4b8cf"/><path d="M-3 -0.7 H6.4 M-3 0.7 H6.4" stroke="#dcdeea" stroke-width="0.6"/><path d="M-6.8 0 L-5 -1.2 V1.2Z" fill="#8d91ad"/></g></svg>
<div class="r" style="left:262px;top:344px;width:1626px;height:34px;background:#f1f3f8;border-bottom:1px solid #eef0f5;box-sizing:border-box"></div>
<div class="r" style="left:285px;top:345px;width:1px;height:32px;background:#eceef4;"></div>
<div class="r" style="left:286px;top:345px;width:1px;height:32px;background:#fafbfd;"></div>
<div class="r" style="left:480px;top:345px;width:1px;height:32px;background:#e9ecf2;"></div>
<div class="r" style="left:481px;top:345px;width:1px;height:32px;background:#f9fafd;"></div>
<div class="r" style="left:721px;top:345px;width:1px;height:32px;background:#e9ecf2;"></div>
<div class="r" style="left:722px;top:345px;width:1px;height:32px;background:#f9fafd;"></div>
<div class="r" style="left:818px;top:345px;width:1px;height:32px;background:#e9ecf2;"></div>
<div class="r" style="left:819px;top:345px;width:1px;height:32px;background:#f9fafd;"></div>
<div class="r" style="left:1060px;top:345px;width:1px;height:32px;background:#e9ecf2;"></div>
<div class="r" style="left:1061px;top:345px;width:1px;height:32px;background:#f9fafd;"></div>
<div class="r" style="left:1205px;top:345px;width:1px;height:32px;background:#e9ecf2;"></div>
<div class="r" style="left:1206px;top:345px;width:1px;height:32px;background:#f9fafd;"></div>
<div class="r" style="left:1302px;top:345px;width:1px;height:32px;background:#e9ecf2;"></div>
<div class="r" style="left:1303px;top:345px;width:1px;height:32px;background:#f9fafd;"></div>
<div class="r" style="left:1399px;top:345px;width:1px;height:32px;background:#e9ecf2;"></div>
<div class="r" style="left:1400px;top:345px;width:1px;height:32px;background:#f9fafd;"></div>
<div class="r" style="left:1495px;top:345px;width:1px;height:32px;background:#e9ecf2;"></div>
<div class="r" style="left:1496px;top:345px;width:1px;height:32px;background:#f9fafd;"></div>
<div class="r" style="left:1836px;top:345px;width:1px;height:32px;background:#e9ecf2;"></div>
<div class="r" style="left:1837px;top:345px;width:1px;height:32px;background:#f9fafd;"></div>
<div class="r" style="left:268px;top:354px;width:14px;height:14px;background:#fff;border:1px solid #cbcdd2;box-sizing:border-box"></div>
<div class="t " style="left:301px;top:352.5px;font-size:12.3px;line-height:18px;color:#333;letter-spacing:0.346px;">GE1/0/5</div>
<div class="t " style="left:737px;top:352.5px;font-size:12.3px;line-height:18px;color:#333;transform-origin:0 50%;transform:scaleX(1.0916);">down</div>
<div class="t " style="left:834.2px;top:345.9px;font-size:12.3px;line-height:16px;color:#4a7ec9;letter-spacing:1.997px;">--</div>
<div class="t " style="left:834.2px;top:361.9px;font-size:12.3px;line-height:16px;color:#4a7ec9;letter-spacing:1.997px;">--</div>
<div class="t " style="left:1076.5px;top:352.5px;font-size:12.3px;line-height:18px;color:#333;">0</div>
<div class="t " style="left:1221px;top:352.5px;font-size:12px;line-height:18px;color:#333;font-weight:350;transform:scaleY(0.96);">三层模式</div>
<div class="t " style="left:1318px;top:352.5px;font-size:12px;line-height:18px;color:#333;font-weight:350;transform:scaleY(0.96);">自协商</div>
<div class="t " style="left:1415px;top:352.5px;font-size:12px;line-height:18px;color:#333;font-weight:350;transform:scaleY(0.96);">未开启</div>
<div class="t " style="left:1511.1px;top:352.5px;font-size:12.3px;line-height:18px;color:#333;letter-spacing:0.428px;">GigabitEthernet1/0/5 Interface</div>
<svg class="r" style="left:1856.4px;top:350.5px" width="20" height="20" viewBox="-10 -10 20 20"><circle cx="0" cy="0" r="9.2" fill="#fafafd" stroke="#e0e3ec" stroke-width="1"/><g transform="rotate(-45) scale(0.9)"><path d="M-6.8 0 L-3.6 -2.1 H6.4 V2.1 H-3.6Z" fill="#b4b8cf"/><path d="M-3 -0.7 H6.4 M-3 0.7 H6.4" stroke="#dcdeea" stroke-width="0.6"/><path d="M-6.8 0 L-5 -1.2 V1.2Z" fill="#8d91ad"/></g></svg>
<div class="r" style="left:480px;top:378px;width:1px;height:32px;background:#e1e3e9;"></div>
<div class="r" style="left:721px;top:378px;width:1px;height:32px;background:#e1e3e9;"></div>
<div class="r" style="left:818px;top:378px;width:1px;height:32px;background:#e1e3e9;"></div>
<div class="r" style="left:1060px;top:378px;width:1px;height:32px;background:#e1e3e9;"></div>
<div class="r" style="left:1205px;top:378px;width:1px;height:32px;background:#e1e3e9;"></div>
<div class="r" style="left:1302px;top:378px;width:1px;height:32px;background:#e1e3e9;"></div>
<div class="r" style="left:1399px;top:378px;width:1px;height:32px;background:#e1e3e9;"></div>
<div class="r" style="left:1495px;top:378px;width:1px;height:32px;background:#e1e3e9;"></div>
<div class="r" style="left:1836px;top:378px;width:1px;height:32px;background:#e1e3e9;"></div>
<div class="r" style="left:268px;top:387px;width:14px;height:14px;background:#fff;border:1px solid #cbcdd2;box-sizing:border-box"></div>
<div class="t " style="left:301px;top:385.5px;font-size:12.3px;line-height:18px;color:#333;letter-spacing:0.346px;">GE1/0/6</div>
<div class="t " style="left:737px;top:385.5px;font-size:12.3px;line-height:18px;color:#333;transform-origin:0 50%;transform:scaleX(1.0916);">down</div>
<div class="t " style="left:834.2px;top:378.9px;font-size:12.3px;line-height:16px;color:#4a7ec9;letter-spacing:1.997px;">--</div>
<div class="t " style="left:834.2px;top:394.9px;font-size:12.3px;line-height:16px;color:#4a7ec9;letter-spacing:1.997px;">--</div>
<div class="t " style="left:1076.5px;top:385.5px;font-size:12.3px;line-height:18px;color:#333;">0</div>
<div class="t " style="left:1221px;top:385.5px;font-size:12px;line-height:18px;color:#333;font-weight:350;transform:scaleY(0.96);">三层模式</div>
<div class="t " style="left:1318px;top:385.5px;font-size:12px;line-height:18px;color:#333;font-weight:350;transform:scaleY(0.96);">自协商</div>
<div class="t " style="left:1415px;top:385.5px;font-size:12px;line-height:18px;color:#333;font-weight:350;transform:scaleY(0.96);">未开启</div>
<div class="t " style="left:1511.1px;top:385.5px;font-size:12.3px;line-height:18px;color:#333;letter-spacing:0.428px;">GigabitEthernet1/0/6 Interface</div>
<svg class="r" style="left:1856.4px;top:383.5px" width="20" height="20" viewBox="-10 -10 20 20"><circle cx="0" cy="0" r="9.2" fill="#fafafd" stroke="#e0e3ec" stroke-width="1"/><g transform="rotate(-45) scale(0.9)"><path d="M-6.8 0 L-3.6 -2.1 H6.4 V2.1 H-3.6Z" fill="#b4b8cf"/><path d="M-3 -0.7 H6.4 M-3 0.7 H6.4" stroke="#dcdeea" stroke-width="0.6"/><path d="M-6.8 0 L-5 -1.2 V1.2Z" fill="#8d91ad"/></g></svg>
<div class="r" style="left:262px;top:410px;width:1626px;height:34px;background:#f1f3f8;border-bottom:1px solid #eef0f5;box-sizing:border-box"></div>
<div class="r" style="left:285px;top:411px;width:1px;height:32px;background:#eceef4;"></div>
<div class="r" style="left:286px;top:411px;width:1px;height:32px;background:#fafbfd;"></div>
<div class="r" style="left:480px;top:411px;width:1px;height:32px;background:#e9ecf2;"></div>
<div class="r" style="left:481px;top:411px;width:1px;height:32px;background:#f9fafd;"></div>
<div class="r" style="left:721px;top:411px;width:1px;height:32px;background:#e9ecf2;"></div>
<div class="r" style="left:722px;top:411px;width:1px;height:32px;background:#f9fafd;"></div>
<div class="r" style="left:818px;top:411px;width:1px;height:32px;background:#e9ecf2;"></div>
<div class="r" style="left:819px;top:411px;width:1px;height:32px;background:#f9fafd;"></div>
<div class="r" style="left:1060px;top:411px;width:1px;height:32px;background:#e9ecf2;"></div>
<div class="r" style="left:1061px;top:411px;width:1px;height:32px;background:#f9fafd;"></div>
<div class="r" style="left:1205px;top:411px;width:1px;height:32px;background:#e9ecf2;"></div>
<div class="r" style="left:1206px;top:411px;width:1px;height:32px;background:#f9fafd;"></div>
<div class="r" style="left:1302px;top:411px;width:1px;height:32px;background:#e9ecf2;"></div>
<div class="r" style="left:1303px;top:411px;width:1px;height:32px;background:#f9fafd;"></div>
<div class="r" style="left:1399px;top:411px;width:1px;height:32px;background:#e9ecf2;"></div>
<div class="r" style="left:1400px;top:411px;width:1px;height:32px;background:#f9fafd;"></div>
<div class="r" style="left:1495px;top:411px;width:1px;height:32px;background:#e9ecf2;"></div>
<div class="r" style="left:1496px;top:411px;width:1px;height:32px;background:#f9fafd;"></div>
<div class="r" style="left:1836px;top:411px;width:1px;height:32px;background:#e9ecf2;"></div>
<div class="r" style="left:1837px;top:411px;width:1px;height:32px;background:#f9fafd;"></div>
<div class="r" style="left:268px;top:420px;width:14px;height:14px;background:#fff;border:1px solid #cbcdd2;box-sizing:border-box"></div>
<div class="t " style="left:301px;top:418.5px;font-size:12.3px;line-height:18px;color:#333;letter-spacing:0.346px;">GE1/0/7</div>
<div class="t " style="left:737px;top:418.5px;font-size:12.3px;line-height:18px;color:#333;transform-origin:0 50%;transform:scaleX(1.0916);">down</div>
<div class="t " style="left:834.2px;top:411.9px;font-size:12.3px;line-height:16px;color:#4a7ec9;letter-spacing:1.997px;">--</div>
<div class="t " style="left:834.2px;top:427.9px;font-size:12.3px;line-height:16px;color:#4a7ec9;letter-spacing:1.997px;">--</div>
<div class="t " style="left:1076.5px;top:418.5px;font-size:12.3px;line-height:18px;color:#333;">0</div>
<div class="t " style="left:1221px;top:418.5px;font-size:12px;line-height:18px;color:#333;font-weight:350;transform:scaleY(0.96);">三层模式</div>
<div class="t " style="left:1318px;top:418.5px;font-size:12px;line-height:18px;color:#333;font-weight:350;transform:scaleY(0.96);">自协商</div>
<div class="t " style="left:1415px;top:418.5px;font-size:12px;line-height:18px;color:#333;font-weight:350;transform:scaleY(0.96);">未开启</div>
<div class="t " style="left:1511.1px;top:418.5px;font-size:12.3px;line-height:18px;color:#333;letter-spacing:0.428px;">GigabitEthernet1/0/7 Interface</div>
<svg class="r" style="left:1856.4px;top:416.5px" width="20" height="20" viewBox="-10 -10 20 20"><circle cx="0" cy="0" r="9.2" fill="#fafafd" stroke="#e0e3ec" stroke-width="1"/><g transform="rotate(-45) scale(0.9)"><path d="M-6.8 0 L-3.6 -2.1 H6.4 V2.1 H-3.6Z" fill="#b4b8cf"/><path d="M-3 -0.7 H6.4 M-3 0.7 H6.4" stroke="#dcdeea" stroke-width="0.6"/><path d="M-6.8 0 L-5 -1.2 V1.2Z" fill="#8d91ad"/></g></svg>
<div class="r" style="left:480px;top:444px;width:1px;height:32px;background:#e1e3e9;"></div>
<div class="r" style="left:721px;top:444px;width:1px;height:32px;background:#e1e3e9;"></div>
<div class="r" style="left:818px;top:444px;width:1px;height:32px;background:#e1e3e9;"></div>
<div class="r" style="left:1060px;top:444px;width:1px;height:32px;background:#e1e3e9;"></div>
<div class="r" style="left:1205px;top:444px;width:1px;height:32px;background:#e1e3e9;"></div>
<div class="r" style="left:1302px;top:444px;width:1px;height:32px;background:#e1e3e9;"></div>
<div class="r" style="left:1399px;top:444px;width:1px;height:32px;background:#e1e3e9;"></div>
<div class="r" style="left:1495px;top:444px;width:1px;height:32px;background:#e1e3e9;"></div>
<div class="r" style="left:1836px;top:444px;width:1px;height:32px;background:#e1e3e9;"></div>
<div class="r" style="left:268px;top:453px;width:14px;height:14px;background:#fff;border:1px solid #cbcdd2;box-sizing:border-box"></div>
<div class="t " style="left:301px;top:451.5px;font-size:12.3px;line-height:18px;color:#333;letter-spacing:0.346px;">GE1/0/8</div>
<div class="t " style="left:737px;top:451.5px;font-size:12.3px;line-height:18px;color:#333;transform-origin:0 50%;transform:scaleX(1.0916);">down</div>
<div class="t " style="left:834.2px;top:444.9px;font-size:12.3px;line-height:16px;color:#4a7ec9;letter-spacing:1.997px;">--</div>
<div class="t " style="left:834.2px;top:460.9px;font-size:12.3px;line-height:16px;color:#4a7ec9;letter-spacing:1.997px;">--</div>
<div class="t " style="left:1076.5px;top:451.5px;font-size:12.3px;line-height:18px;color:#333;">0</div>
<div class="t " style="left:1221px;top:451.5px;font-size:12px;line-height:18px;color:#333;font-weight:350;transform:scaleY(0.96);">三层模式</div>
<div class="t " style="left:1318px;top:451.5px;font-size:12px;line-height:18px;color:#333;font-weight:350;transform:scaleY(0.96);">自协商</div>
<div class="t " style="left:1415px;top:451.5px;font-size:12px;line-height:18px;color:#333;font-weight:350;transform:scaleY(0.96);">未开启</div>
<div class="t " style="left:1511.1px;top:451.5px;font-size:12.3px;line-height:18px;color:#333;letter-spacing:0.428px;">GigabitEthernet1/0/8 Interface</div>
<svg class="r" style="left:1856.4px;top:449.5px" width="20" height="20" viewBox="-10 -10 20 20"><circle cx="0" cy="0" r="9.2" fill="#fafafd" stroke="#e0e3ec" stroke-width="1"/><g transform="rotate(-45) scale(0.9)"><path d="M-6.8 0 L-3.6 -2.1 H6.4 V2.1 H-3.6Z" fill="#b4b8cf"/><path d="M-3 -0.7 H6.4 M-3 0.7 H6.4" stroke="#dcdeea" stroke-width="0.6"/><path d="M-6.8 0 L-5 -1.2 V1.2Z" fill="#8d91ad"/></g></svg>
<div class="r" style="left:262px;top:476px;width:1626px;height:34px;background:#f1f3f8;border-bottom:1px solid #eef0f5;box-sizing:border-box"></div>
<div class="r" style="left:285px;top:477px;width:1px;height:32px;background:#eceef4;"></div>
<div class="r" style="left:286px;top:477px;width:1px;height:32px;background:#fafbfd;"></div>
<div class="r" style="left:480px;top:477px;width:1px;height:32px;background:#e9ecf2;"></div>
<div class="r" style="left:481px;top:477px;width:1px;height:32px;background:#f9fafd;"></div>
<div class="r" style="left:721px;top:477px;width:1px;height:32px;background:#e9ecf2;"></div>
<div class="r" style="left:722px;top:477px;width:1px;height:32px;background:#f9fafd;"></div>
<div class="r" style="left:818px;top:477px;width:1px;height:32px;background:#e9ecf2;"></div>
<div class="r" style="left:819px;top:477px;width:1px;height:32px;background:#f9fafd;"></div>
<div class="r" style="left:1060px;top:477px;width:1px;height:32px;background:#e9ecf2;"></div>
<div class="r" style="left:1061px;top:477px;width:1px;height:32px;background:#f9fafd;"></div>
<div class="r" style="left:1205px;top:477px;width:1px;height:32px;background:#e9ecf2;"></div>
<div class="r" style="left:1206px;top:477px;width:1px;height:32px;background:#f9fafd;"></div>
<div class="r" style="left:1302px;top:477px;width:1px;height:32px;background:#e9ecf2;"></div>
<div class="r" style="left:1303px;top:477px;width:1px;height:32px;background:#f9fafd;"></div>
<div class="r" style="left:1399px;top:477px;width:1px;height:32px;background:#e9ecf2;"></div>
<div class="r" style="left:1400px;top:477px;width:1px;height:32px;background:#f9fafd;"></div>
<div class="r" style="left:1495px;top:477px;width:1px;height:32px;background:#e9ecf2;"></div>
<div class="r" style="left:1496px;top:477px;width:1px;height:32px;background:#f9fafd;"></div>
<div class="r" style="left:1836px;top:477px;width:1px;height:32px;background:#e9ecf2;"></div>
<div class="r" style="left:1837px;top:477px;width:1px;height:32px;background:#f9fafd;"></div>
<div class="r" style="left:268px;top:486px;width:14px;height:14px;background:#fff;border:1px solid #cbcdd2;box-sizing:border-box"></div>
<div class="t " style="left:301px;top:484.5px;font-size:12.3px;line-height:18px;color:#333;letter-spacing:0.346px;">GE1/0/9</div>
<div class="t " style="left:737px;top:484.5px;font-size:12.3px;line-height:18px;color:#333;transform-origin:0 50%;transform:scaleX(1.0916);">down</div>
<div class="t " style="left:834.2px;top:477.9px;font-size:12.3px;line-height:16px;color:#4a7ec9;letter-spacing:1.997px;">--</div>
<div class="t " style="left:834.2px;top:493.9px;font-size:12.3px;line-height:16px;color:#4a7ec9;letter-spacing:1.997px;">--</div>
<div class="t " style="left:1076.5px;top:484.5px;font-size:12.3px;line-height:18px;color:#333;">0</div>
<div class="t " style="left:1221px;top:484.5px;font-size:12px;line-height:18px;color:#333;font-weight:350;transform:scaleY(0.96);">三层模式</div>
<div class="t " style="left:1318px;top:484.5px;font-size:12px;line-height:18px;color:#333;font-weight:350;transform:scaleY(0.96);">自协商</div>
<div class="t " style="left:1415px;top:484.5px;font-size:12px;line-height:18px;color:#333;font-weight:350;transform:scaleY(0.96);">未开启</div>
<div class="t " style="left:1511.1px;top:484.5px;font-size:12.3px;line-height:18px;color:#333;letter-spacing:0.428px;">GigabitEthernet1/0/9 Interface</div>
<svg class="r" style="left:1856.4px;top:482.5px" width="20" height="20" viewBox="-10 -10 20 20"><circle cx="0" cy="0" r="9.2" fill="#fafafd" stroke="#e0e3ec" stroke-width="1"/><g transform="rotate(-45) scale(0.9)"><path d="M-6.8 0 L-3.6 -2.1 H6.4 V2.1 H-3.6Z" fill="#b4b8cf"/><path d="M-3 -0.7 H6.4 M-3 0.7 H6.4" stroke="#dcdeea" stroke-width="0.6"/><path d="M-6.8 0 L-5 -1.2 V1.2Z" fill="#8d91ad"/></g></svg>
<div class="r" style="left:480px;top:510px;width:1px;height:32px;background:#e1e3e9;"></div>
<div class="r" style="left:721px;top:510px;width:1px;height:32px;background:#e1e3e9;"></div>
<div class="r" style="left:818px;top:510px;width:1px;height:32px;background:#e1e3e9;"></div>
<div class="r" style="left:1060px;top:510px;width:1px;height:32px;background:#e1e3e9;"></div>
<div class="r" style="left:1205px;top:510px;width:1px;height:32px;background:#e1e3e9;"></div>
<div class="r" style="left:1302px;top:510px;width:1px;height:32px;background:#e1e3e9;"></div>
<div class="r" style="left:1399px;top:510px;width:1px;height:32px;background:#e1e3e9;"></div>
<div class="r" style="left:1495px;top:510px;width:1px;height:32px;background:#e1e3e9;"></div>
<div class="r" style="left:1836px;top:510px;width:1px;height:32px;background:#e1e3e9;"></div>
<div class="r" style="left:268px;top:519px;width:14px;height:14px;background:#fff;border:1px solid #cbcdd2;box-sizing:border-box"></div>
<div class="t " style="left:301px;top:517.5px;font-size:12.3px;line-height:18px;color:#333;letter-spacing:0.319px;">GE1/0/10</div>
<div class="t " style="left:737px;top:517.5px;font-size:12.3px;line-height:18px;color:#333;transform-origin:0 50%;transform:scaleX(1.0916);">down</div>
<div class="t " style="left:834.2px;top:510.9px;font-size:12.3px;line-height:16px;color:#4a7ec9;letter-spacing:1.997px;">--</div>
<div class="t " style="left:834.2px;top:526.9px;font-size:12.3px;line-height:16px;color:#4a7ec9;letter-spacing:1.997px;">--</div>
<div class="t " style="left:1076.5px;top:517.5px;font-size:12.3px;line-height:18px;color:#333;">0</div>
<div class="t " style="left:1221px;top:517.5px;font-size:12px;line-height:18px;color:#333;font-weight:350;transform:scaleY(0.96);">三层模式</div>
<div class="t " style="left:1318px;top:517.5px;font-size:12px;line-height:18px;color:#333;font-weight:350;transform:scaleY(0.96);">自协商</div>
<div class="t " style="left:1415px;top:517.5px;font-size:12px;line-height:18px;color:#333;font-weight:350;transform:scaleY(0.96);">未开启</div>
<div class="t " style="left:1511.1px;top:517.5px;font-size:12.3px;line-height:18px;color:#333;letter-spacing:0.420px;">GigabitEthernet1/0/10 Interface</div>
<svg class="r" style="left:1856.4px;top:515.5px" width="20" height="20" viewBox="-10 -10 20 20"><circle cx="0" cy="0" r="9.2" fill="#fafafd" stroke="#e0e3ec" stroke-width="1"/><g transform="rotate(-45) scale(0.9)"><path d="M-6.8 0 L-3.6 -2.1 H6.4 V2.1 H-3.6Z" fill="#b4b8cf"/><path d="M-3 -0.7 H6.4 M-3 0.7 H6.4" stroke="#dcdeea" stroke-width="0.6"/><path d="M-6.8 0 L-5 -1.2 V1.2Z" fill="#8d91ad"/></g></svg>
<div class="r" style="left:262px;top:542px;width:1626px;height:34px;background:#f1f3f8;border-bottom:1px solid #eef0f5;box-sizing:border-box"></div>
<div class="r" style="left:285px;top:543px;width:1px;height:32px;background:#eceef4;"></div>
<div class="r" style="left:286px;top:543px;width:1px;height:32px;background:#fafbfd;"></div>
<div class="r" style="left:480px;top:543px;width:1px;height:32px;background:#e9ecf2;"></div>
<div class="r" style="left:481px;top:543px;width:1px;height:32px;background:#f9fafd;"></div>
<div class="r" style="left:721px;top:543px;width:1px;height:32px;background:#e9ecf2;"></div>
<div class="r" style="left:722px;top:543px;width:1px;height:32px;background:#f9fafd;"></div>
<div class="r" style="left:818px;top:543px;width:1px;height:32px;background:#e9ecf2;"></div>
<div class="r" style="left:819px;top:543px;width:1px;height:32px;background:#f9fafd;"></div>
<div class="r" style="left:1060px;top:543px;width:1px;height:32px;background:#e9ecf2;"></div>
<div class="r" style="left:1061px;top:543px;width:1px;height:32px;background:#f9fafd;"></div>
<div class="r" style="left:1205px;top:543px;width:1px;height:32px;background:#e9ecf2;"></div>
<div class="r" style="left:1206px;top:543px;width:1px;height:32px;background:#f9fafd;"></div>
<div class="r" style="left:1302px;top:543px;width:1px;height:32px;background:#e9ecf2;"></div>
<div class="r" style="left:1303px;top:543px;width:1px;height:32px;background:#f9fafd;"></div>
<div class="r" style="left:1399px;top:543px;width:1px;height:32px;background:#e9ecf2;"></div>
<div class="r" style="left:1400px;top:543px;width:1px;height:32px;background:#f9fafd;"></div>
<div class="r" style="left:1495px;top:543px;width:1px;height:32px;background:#e9ecf2;"></div>
<div class="r" style="left:1496px;top:543px;width:1px;height:32px;background:#f9fafd;"></div>
<div class="r" style="left:1836px;top:543px;width:1px;height:32px;background:#e9ecf2;"></div>
<div class="r" style="left:1837px;top:543px;width:1px;height:32px;background:#f9fafd;"></div>
<div class="r" style="left:268px;top:552px;width:14px;height:14px;background:#fff;border:1px solid #cbcdd2;box-sizing:border-box"></div>
<div class="t " style="left:301px;top:550.5px;font-size:12.3px;line-height:18px;color:#333;letter-spacing:0.450px;">GE1/0/11</div>
<div class="t " style="left:737px;top:550.5px;font-size:12.3px;line-height:18px;color:#333;transform-origin:0 50%;transform:scaleX(1.0916);">down</div>
<div class="t " style="left:834.2px;top:543.9px;font-size:12.3px;line-height:16px;color:#4a7ec9;letter-spacing:1.997px;">--</div>
<div class="t " style="left:834.2px;top:559.9px;font-size:12.3px;line-height:16px;color:#4a7ec9;letter-spacing:1.997px;">--</div>
<div class="t " style="left:1076.5px;top:550.5px;font-size:12.3px;line-height:18px;color:#333;">0</div>
<div class="t " style="left:1221px;top:550.5px;font-size:12px;line-height:18px;color:#333;font-weight:350;transform:scaleY(0.96);">三层模式</div>
<div class="t " style="left:1318px;top:550.5px;font-size:12px;line-height:18px;color:#333;font-weight:350;transform:scaleY(0.96);">自协商</div>
<div class="t " style="left:1415px;top:550.5px;font-size:12px;line-height:18px;color:#333;font-weight:350;transform:scaleY(0.96);">未开启</div>
<div class="t " style="left:1511.1px;top:550.5px;font-size:12.3px;line-height:18px;color:#333;letter-spacing:0.450px;">GigabitEthernet1/0/11 Interface</div>
<svg class="r" style="left:1856.4px;top:548.5px" width="20" height="20" viewBox="-10 -10 20 20"><circle cx="0" cy="0" r="9.2" fill="#fafafd" stroke="#e0e3ec" stroke-width="1"/><g transform="rotate(-45) scale(0.9)"><path d="M-6.8 0 L-3.6 -2.1 H6.4 V2.1 H-3.6Z" fill="#b4b8cf"/><path d="M-3 -0.7 H6.4 M-3 0.7 H6.4" stroke="#dcdeea" stroke-width="0.6"/><path d="M-6.8 0 L-5 -1.2 V1.2Z" fill="#8d91ad"/></g></svg>
<div class="r" style="left:480px;top:576px;width:1px;height:32px;background:#e1e3e9;"></div>
<div class="r" style="left:721px;top:576px;width:1px;height:32px;background:#e1e3e9;"></div>
<div class="r" style="left:818px;top:576px;width:1px;height:32px;background:#e1e3e9;"></div>
<div class="r" style="left:1060px;top:576px;width:1px;height:32px;background:#e1e3e9;"></div>
<div class="r" style="left:1205px;top:576px;width:1px;height:32px;background:#e1e3e9;"></div>
<div class="r" style="left:1302px;top:576px;width:1px;height:32px;background:#e1e3e9;"></div>
<div class="r" style="left:1399px;top:576px;width:1px;height:32px;background:#e1e3e9;"></div>
<div class="r" style="left:1495px;top:576px;width:1px;height:32px;background:#e1e3e9;"></div>
<div class="r" style="left:1836px;top:576px;width:1px;height:32px;background:#e1e3e9;"></div>
<div class="r" style="left:268px;top:585px;width:14px;height:14px;background:#fff;border:1px solid #cbcdd2;box-sizing:border-box"></div>
<div class="t " style="left:301px;top:583.5px;font-size:12.3px;line-height:18px;color:#333;letter-spacing:0.319px;">GE1/0/12</div>
<div class="t " style="left:737px;top:583.5px;font-size:12.3px;line-height:18px;color:#333;transform-origin:0 50%;transform:scaleX(1.0916);">down</div>
<div class="t " style="left:834.2px;top:576.9px;font-size:12.3px;line-height:16px;color:#4a7ec9;letter-spacing:1.997px;">--</div>
<div class="t " style="left:834.2px;top:592.9px;font-size:12.3px;line-height:16px;color:#4a7ec9;letter-spacing:1.997px;">--</div>
<div class="t " style="left:1076.5px;top:583.5px;font-size:12.3px;line-height:18px;color:#333;">0</div>
<div class="t " style="left:1221px;top:583.5px;font-size:12px;line-height:18px;color:#333;font-weight:350;transform:scaleY(0.96);">三层模式</div>
<div class="t " style="left:1318px;top:583.5px;font-size:12px;line-height:18px;color:#333;font-weight:350;transform:scaleY(0.96);">自协商</div>
<div class="t " style="left:1415px;top:583.5px;font-size:12px;line-height:18px;color:#333;font-weight:350;transform:scaleY(0.96);">未开启</div>
<div class="t " style="left:1511.1px;top:583.5px;font-size:12.3px;line-height:18px;color:#333;letter-spacing:0.420px;">GigabitEthernet1/0/12 Interface</div>
<svg class="r" style="left:1856.4px;top:581.5px" width="20" height="20" viewBox="-10 -10 20 20"><circle cx="0" cy="0" r="9.2" fill="#fafafd" stroke="#e0e3ec" stroke-width="1"/><g transform="rotate(-45) scale(0.9)"><path d="M-6.8 0 L-3.6 -2.1 H6.4 V2.1 H-3.6Z" fill="#b4b8cf"/><path d="M-3 -0.7 H6.4 M-3 0.7 H6.4" stroke="#dcdeea" stroke-width="0.6"/><path d="M-6.8 0 L-5 -1.2 V1.2Z" fill="#8d91ad"/></g></svg>
<div class="r" style="left:262px;top:608px;width:1626px;height:34px;background:#f1f3f8;border-bottom:1px solid #eef0f5;box-sizing:border-box"></div>
<div class="r" style="left:285px;top:609px;width:1px;height:32px;background:#eceef4;"></div>
<div class="r" style="left:286px;top:609px;width:1px;height:32px;background:#fafbfd;"></div>
<div class="r" style="left:480px;top:609px;width:1px;height:32px;background:#e9ecf2;"></div>
<div class="r" style="left:481px;top:609px;width:1px;height:32px;background:#f9fafd;"></div>
<div class="r" style="left:721px;top:609px;width:1px;height:32px;background:#e9ecf2;"></div>
<div class="r" style="left:722px;top:609px;width:1px;height:32px;background:#f9fafd;"></div>
<div class="r" style="left:818px;top:609px;width:1px;height:32px;background:#e9ecf2;"></div>
<div class="r" style="left:819px;top:609px;width:1px;height:32px;background:#f9fafd;"></div>
<div class="r" style="left:1060px;top:609px;width:1px;height:32px;background:#e9ecf2;"></div>
<div class="r" style="left:1061px;top:609px;width:1px;height:32px;background:#f9fafd;"></div>
<div class="r" style="left:1205px;top:609px;width:1px;height:32px;background:#e9ecf2;"></div>
<div class="r" style="left:1206px;top:609px;width:1px;height:32px;background:#f9fafd;"></div>
<div class="r" style="left:1302px;top:609px;width:1px;height:32px;background:#e9ecf2;"></div>
<div class="r" style="left:1303px;top:609px;width:1px;height:32px;background:#f9fafd;"></div>
<div class="r" style="left:1399px;top:609px;width:1px;height:32px;background:#e9ecf2;"></div>
<div class="r" style="left:1400px;top:609px;width:1px;height:32px;background:#f9fafd;"></div>
<div class="r" style="left:1495px;top:609px;width:1px;height:32px;background:#e9ecf2;"></div>
<div class="r" style="left:1496px;top:609px;width:1px;height:32px;background:#f9fafd;"></div>
<div class="r" style="left:1836px;top:609px;width:1px;height:32px;background:#e9ecf2;"></div>
<div class="r" style="left:1837px;top:609px;width:1px;height:32px;background:#f9fafd;"></div>
<div class="r" style="left:268px;top:618px;width:14px;height:14px;background:#fff;border:1px solid #cbcdd2;box-sizing:border-box"></div>
<div class="t " style="left:301px;top:616.5px;font-size:12.3px;line-height:18px;color:#333;letter-spacing:0.319px;">GE1/0/13</div>
<div class="t " style="left:737px;top:616.5px;font-size:12.3px;line-height:18px;color:#333;transform-origin:0 50%;transform:scaleX(1.0916);">down</div>
<div class="t " style="left:834.2px;top:609.9px;font-size:12.3px;line-height:16px;color:#4a7ec9;letter-spacing:1.997px;">--</div>
<div class="t " style="left:834.2px;top:625.9px;font-size:12.3px;line-height:16px;color:#4a7ec9;letter-spacing:1.997px;">--</div>
<div class="t " style="left:1076.5px;top:616.5px;font-size:12.3px;line-height:18px;color:#333;">0</div>
<div class="t " style="left:1221px;top:616.5px;font-size:12px;line-height:18px;color:#333;font-weight:350;transform:scaleY(0.96);">三层模式</div>
<div class="t " style="left:1318px;top:616.5px;font-size:12px;line-height:18px;color:#333;font-weight:350;transform:scaleY(0.96);">自协商</div>
<div class="t " style="left:1415px;top:616.5px;font-size:12px;line-height:18px;color:#333;font-weight:350;transform:scaleY(0.96);">未开启</div>
<div class="t " style="left:1511.1px;top:616.5px;font-size:12.3px;line-height:18px;color:#333;letter-spacing:0.420px;">GigabitEthernet1/0/13 Interface</div>
<svg class="r" style="left:1856.4px;top:614.5px" width="20" height="20" viewBox="-10 -10 20 20"><circle cx="0" cy="0" r="9.2" fill="#fafafd" stroke="#e0e3ec" stroke-width="1"/><g transform="rotate(-45) scale(0.9)"><path d="M-6.8 0 L-3.6 -2.1 H6.4 V2.1 H-3.6Z" fill="#b4b8cf"/><path d="M-3 -0.7 H6.4 M-3 0.7 H6.4" stroke="#dcdeea" stroke-width="0.6"/><path d="M-6.8 0 L-5 -1.2 V1.2Z" fill="#8d91ad"/></g></svg>
<div class="r" style="left:1887px;top:154px;width:1px;height:470px;background:#e6e8ee;"></div>
</body></html>
